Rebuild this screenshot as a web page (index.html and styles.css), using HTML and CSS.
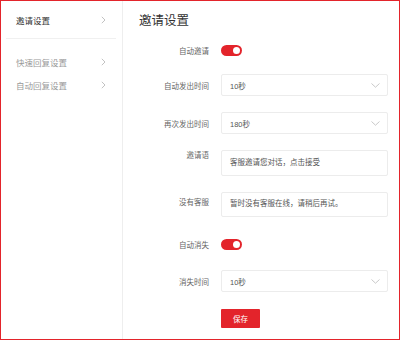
FILE: index.html
```html
<!DOCTYPE html>
<html lang="zh">
<head>
    <meta charset="UTF-8">
    <title>邀请设置</title>
    <link rel="stylesheet" href="styles.css">
</head>
<body>
    <div class="frame">
        <div class="sidebar">
            <div class="menu-group first">
                <div class="menu-item active">邀请设置
                    <svg class="arrow" width="5" height="8" viewBox="0 0 5 8"><path d="M0.8 0.8 L4 4 L0.8 7.2" fill="none" stroke="#bbb" stroke-width="0.9"/></svg>
                </div>
            </div>
            <div class="menu-group">
                <div class="menu-item">快速回复设置
                    <svg class="arrow" width="5" height="8" viewBox="0 0 5 8"><path d="M0.8 0.8 L4 4 L0.8 7.2" fill="none" stroke="#bbb" stroke-width="0.9"/></svg>
                </div>
                <div class="menu-item">自动回复设置
                    <svg class="arrow" width="5" height="8" viewBox="0 0 5 8"><path d="M0.8 0.8 L4 4 L0.8 7.2" fill="none" stroke="#bbb" stroke-width="0.9"/></svg>
                </div>
            </div>
        </div>

        <div class="main">
            <h1>邀请设置</h1>

            <div class="form-row toggle-row">
                <label>自动邀请</label>
                <div class="switch on"><span class="knob"></span></div>
            </div>

            <div class="form-row">
                <label>自动发出时间</label>
                <div class="select">10秒
                    <svg class="caret" width="9" height="5" viewBox="0 0 9 5"><path d="M0.5 0.5 L4.5 4.2 L8.5 0.5" fill="none" stroke="#bbb" stroke-width="0.8"/></svg>
                </div>
            </div>

            <div class="form-row">
                <label>再次发出时间</label>
                <div class="select">180秒
                    <svg class="caret" width="9" height="5" viewBox="0 0 9 5"><path d="M0.5 0.5 L4.5 4.2 L8.5 0.5" fill="none" stroke="#bbb" stroke-width="0.8"/></svg>
                </div>
            </div>

            <div class="form-row text-row">
                <label>邀请语</label>
                <div class="textbox">客服邀请您对话，点击接受</div>
            </div>

            <div class="form-row text-row low">
                <label>没有客服</label>
                <div class="textbox">暂时没有客服在线，请稍后再试。</div>
            </div>

            <div class="form-row toggle-row second">
                <label>自动消失</label>
                <div class="switch on"><span class="knob"></span></div>
            </div>

            <div class="form-row">
                <label>消失时间</label>
                <div class="select">10秒
                    <svg class="caret" width="9" height="5" viewBox="0 0 9 5"><path d="M0.5 0.5 L4.5 4.2 L8.5 0.5" fill="none" stroke="#bbb" stroke-width="0.8"/></svg>
                </div>
            </div>

            <div class="form-row">
                <label></label>
                <button class="save-btn">保存</button>
            </div>
        </div>
    </div>
</body>
</html>
```

FILE: styles.css
```css
body {
    margin: 0;
    font-family: 'Liberation Sans', 'Noto Sans CJK SC', sans-serif;
    background: #fff;
    color: #333;
}
.frame {
    width: 400px;
    height: 340px;
    box-sizing: border-box;
    border: 1px solid #e3242b;
    display: flex;
}
.sidebar {
    width: 122px;
    border-right: 1px solid #eee;
    padding: 7px 6px 0 5px;
    box-sizing: border-box;
}
.menu-group {
    padding-top: 11px;
}
.menu-group.first {
    padding-top: 0;
    padding-bottom: 7px;
    border-bottom: 1px solid #f0f0f0;
}
.menu-item {
    height: 23px;
    padding: 0 10px 0 10px;
    font-size: 8.5px;
    color: #999;
    display: flex;
    align-items: center;
    justify-content: space-between;
}
.menu-item.active {
    color: #333;
}
.main {
    flex: 1;
    padding: 0 11px 0 16px;
}
h1 {
    font-size: 12.5px;
    font-weight: normal;
    color: #333;
    margin: 12px 0 0;
    line-height: 16px;
}
.form-row {
    display: flex;
    align-items: center;
    margin-bottom: 16px;
}
.form-row label {
    width: 70px;
    margin-right: 12px;
    text-align: right;
    font-size: 7.5px;
    color: #666;
    flex-shrink: 0;
}
.toggle-row {
    height: 22px;
    margin-top: 10px;
    margin-bottom: 13px;
}
.toggle-row.second {
    margin-top: 0;
    margin-bottom: 15px;
}
.switch {
    width: 21px;
    height: 11px;
    border-radius: 6px;
    background: #e3242b;
    position: relative;
}
.knob {
    position: absolute;
    right: 2px;
    top: 2px;
    width: 7px;
    height: 7px;
    border-radius: 50%;
    background: #fff;
}
.select, .textbox {
    flex: 1;
    border: 1px solid #ececec;
    border-radius: 2px;
    box-sizing: border-box;
    font-size: 7.5px;
    color: #555;
    padding: 0 7px 0 8px;
}
.select {
    height: 22px;
    display: flex;
    align-items: center;
    justify-content: space-between;
}
.text-row {
    align-items: flex-start;
}
.text-row label {
    line-height: 12px;
}
.text-row.low label {
    padding-top: 5px;
}
.textbox {
    height: 26px;
    line-height: 12px;
    padding-top: 6px;
}
.text-row.low .textbox {
    height: 25px;
    padding-top: 5px;
}
.save-btn {
    width: 39px;
    height: 19px;
    border: none;
    border-radius: 1px;
    background: #e3242b;
    color: #fff;
    font-family: inherit;
    font-size: 7.5px;
    padding: 0;
    margin-top: 1px;
}
```
